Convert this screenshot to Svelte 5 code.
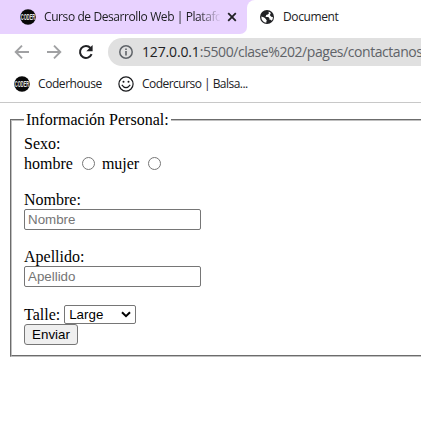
<script>
  const fields = ['Nombre', 'Apellido'];
</script>

{#snippet coder()}
  <svg class="coder" width="16" height="16" viewBox="0 0 16 16">
    <circle cx="8" cy="8" r="7.8" fill="#080808" />
    <text x="0.8" y="11.1" textLength="14.4" lengthAdjust="spacingAndGlyphs">CODER</text>
  </svg>
{/snippet}

<div class="browser">
  <div class="tabs">
    <div class="tab inactive">
      {@render coder()}
      <span class="title faded">Curso de Desarrollo Web | Platafo</span>
      <svg class="close" width="10" height="10" viewBox="0 0 10 10"><path d="M1.2 1.2 8.8 8.8M8.8 1.2 1.2 8.8" stroke="#202124" stroke-width="1.8" /></svg>
    </div>
    <div class="tab active">
      <svg width="16" height="16" viewBox="0 0 16 16">
        <circle cx="8" cy="8" r="7" fill="#202124" />
        <path d="M9.4 2.7 10 4.2 8.8 5.6 7.1 6v1.5L5.8 8.1h3.5l1.2 1.5v1.2h1.3l1 1A6 6 0 0 0 13.9 8l-1.7-.2-1.4-1.7 1-1.7-.6-1.1Z" fill="#fff" />
        <path d="M2.3 7.6 5.2 8.5 6.8 10.1 7.5 11.3 7.3 13.8A5.9 5.9 0 0 1 2.3 7.6Z" fill="#fff" />
      </svg>
      <span class="title doc">Document</span>
    </div>
  </div>

  <div class="toolbar">
    <svg class="nav" width="16" height="16" viewBox="0 0 16 16"><path d="M15 8H2M8 1.7 1.7 8 8 14.3" fill="none" stroke="#a0a1a3" stroke-width="1.9" /></svg>
    <svg class="nav" width="16" height="16" viewBox="0 0 16 16"><path d="M1 8h13M8 1.7 14.3 8 8 14.3" fill="none" stroke="#a0a1a3" stroke-width="1.9" /></svg>
    <svg class="nav" width="16" height="16" viewBox="0 0 16 16"><path d="M13.6 10.2A6 6 0 1 1 12.5 4" fill="none" stroke="#202124" stroke-width="2" /><path d="M14.6 1v6.3H8.3Z" fill="#202124" /></svg>
    <div class="address">
      <svg width="16" height="16" viewBox="0 0 16 16"><circle cx="8" cy="8" r="6.2" fill="none" stroke="#5f6368" stroke-width="1.5" /><path d="M8 7v4.4M8 4.4v1.5" stroke="#5f6368" stroke-width="1.6" /></svg>
      <span class="url"><b>127.0.0.1</b>:5500/clase%202/pages/contactanos</span>
    </div>
  </div>

  <div class="bookmarks">
    {@render coder()}
    <span class="mark first">Coderhouse</span>
    <svg width="16" height="16" viewBox="0 0 16 16"><circle cx="8" cy="8" r="7.1" fill="none" stroke="#18191c" stroke-width="1.2" /><circle cx="5.5" cy="5.8" r="1" fill="#18191c" /><circle cx="10.5" cy="5.8" r="1" fill="#18191c" /><path d="M3.8 8.8Q8 14.6 12.2 8.8" fill="none" stroke="#18191c" stroke-width="1.2" /></svg>
    <span class="mark second">Codercurso | Balsa...</span>
  </div>

  <form onsubmit={(e) => e.preventDefault()}>
    <fieldset>
      <legend>Información Personal:</legend>
      <div class="line sex">Sexo:</div>
      <div class="line choices">
        <label for="h">hombre</label><input id="h" type="radio" name="sexo" />
        <label for="m">mujer</label><input id="m" type="radio" name="sexo" />
      </div>
      {#each fields as name}
        <div class="field">
          <label for={name}>{name}:</label>
          <input id={name} type="text" placeholder={name} />
        </div>
      {/each}
      <div class="size">
        <label for="talle">Talle:</label>
        <div class="select">
          <select id="talle"><option>Large</option><option>Medium</option><option>Small</option></select>
          <svg width="10" height="7" viewBox="0 0 10 7"><path d="M1 1.2 5 5.2 9 1.2" fill="none" stroke="#000" stroke-width="2" /></svg>
        </div>
      </div>
      <button>Enviar</button>
    </fieldset>
  </form>
</div>

<style>
  :global(body) { margin: 0; background: #fff; overflow: hidden; }
  .browser { width: 421px; height: 421px; overflow: hidden; box-sizing: border-box; font-family: "Open Sans", "Noto Sans", sans-serif; color: #202124; }
  svg { display: block; flex: none; }
  .coder text { font: 700 8.6px "Liberation Sans", sans-serif; fill: #e4e4e4; }
  .tabs { display: flex; height: 34px; background: linear-gradient(90deg, #fff 0 247px, #e8d2ff 247px); }
  .tab { display: flex; align-items: center; height: 34px; box-sizing: border-box; }
  .inactive { width: 247px; padding-left: 20px; background: #e8d2ff; border-bottom-right-radius: 7px; }
  .active { flex: 1; background: #fff; border-top-left-radius: 8px; padding-left: 12px; }
  .title { font-size: 12px; line-height: 18px; white-space: nowrap; }
  .faded { width: 176px; margin-left: 8px; letter-spacing: -0.41px; mask-image: linear-gradient(90deg, #000 154px, transparent 177px); }
  .close { margin-left: 7px; }
  .doc { margin-left: 8px; letter-spacing: -0.4px; }
  .toolbar { display: flex; align-items: center; height: 36px; padding-left: 14px; }
  .nav { margin-right: 16px; }
  .address { display: flex; align-items: center; flex: 1; height: 28px; margin-left: -2px; padding-left: 10px; background: #e0e0e0; border-radius: 14px 0 0 14px; }
  .url { margin-left: 8px; font-size: 14px; line-height: 20px; white-space: nowrap; color: #5f6368; letter-spacing: -0.44px; }
  .url b { font-weight: 400; color: #202124; letter-spacing: -0.15px; }
  .bookmarks { display: flex; align-items: center; box-sizing: border-box; height: 33px; padding: 0 0 5px 14px; border-bottom: 1px solid #c8c8c8; }
  .mark { font-size: 12px; line-height: 18px; white-space: nowrap; }
  .first { width: 64px; margin: 0 16px 0 8px; letter-spacing: -0.43px; }
  .second { margin-left: 8px; letter-spacing: -0.53px; }
  form { padding: 8px 0 0 10px; width: 440px; font-family: "Liberation Serif", serif; font-size: 16px; line-height: 18px; color: #000; }
  fieldset { box-sizing: border-box; height: 246px; margin: 0; padding: 6px 12px 0; border: 2px groove #c0c0c0; min-width: 0; }
  legend { padding: 0 2px; height: 18px; }
  .line { height: 20px; }
  .sex { line-height: 18px; }
  .choices { display: flex; align-items: center; height: 18px; }
  .choices input { width: 13px; height: 13px; margin: -2px 7px 0 9px; }
  .field { padding-top: 18px; height: 39px; }
  .field label { display: block; height: 18px; }
  .field input { display: block; width: 177px; height: 21px; box-sizing: border-box; margin: 0; padding: 1px 3px; border: 1px solid #767676; border-radius: 2px; font: 13.333px "Liberation Sans", sans-serif; }
  .field input::placeholder { color: #757575; }
  .size { display: flex; align-items: center; height: 19px; padding-top: 18px; }
  .select { position: relative; margin-left: 4px; }
  select { appearance: none; display: block; width: 72px; height: 19px; box-sizing: border-box; margin: 0; padding: 0 4px; border: 1px solid #767676; border-radius: 2px; background: #fff; color: #000; font: 13.333px "Liberation Sans", sans-serif; }
  .select svg { position: absolute; right: 5px; top: 6px; pointer-events: none; }
  button { display: block; width: 54px; height: 21px; margin: 0; padding: 0; border: 1px solid #767676; border-radius: 3px; background: #efefef; color: #000; font: 13.333px "Liberation Sans", sans-serif; }
</style>
